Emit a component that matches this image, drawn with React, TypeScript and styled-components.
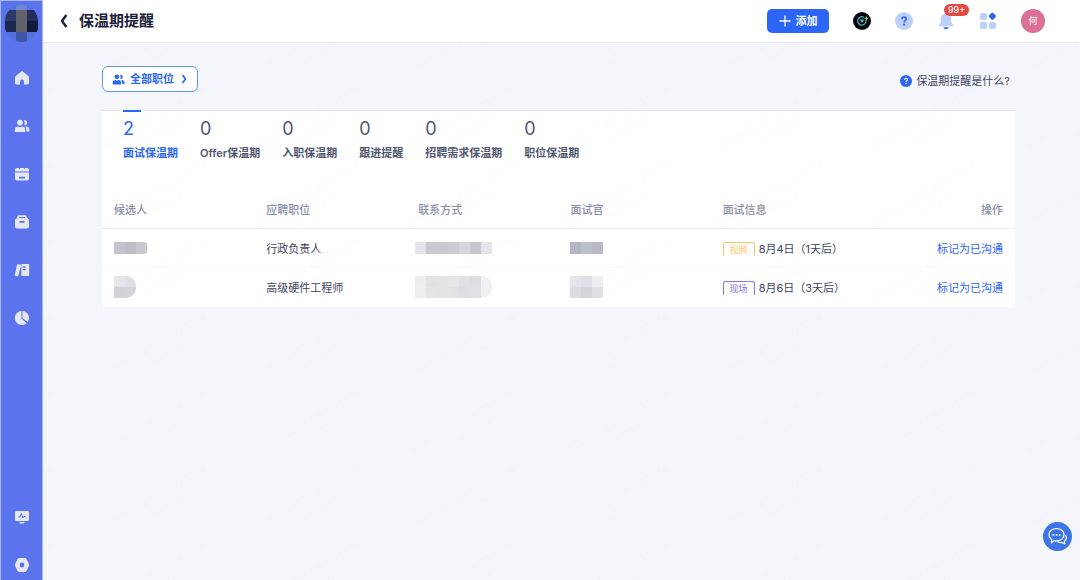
import React from "react";
import styled, { createGlobalStyle } from "styled-components";

const GlobalStyle = createGlobalStyle`
  * { box-sizing: border-box; }
  body {
    margin: 0;
    background: #f4f6fb;
    color: #3f4560;
    font-family: Inter, "Noto Sans CJK SC", sans-serif;
    font-size: 11px;
    line-height: 16px;
  }
  a { color: inherit; text-decoration: none; }
  button {
    margin: 0;
    padding: 0;
    border: 0;
    background: none;
    color: inherit;
    font: inherit;
    cursor: pointer;
  }
  svg { display: block; flex: none; }
`;

const Shell = styled.div`
  display: flex;
  align-items: flex-start;
  min-height: 100vh;
`;

const Sidebar = styled.aside`
  position: sticky;
  top: 0;
  flex: none;
  display: flex;
  flex-direction: column;
  align-items: center;
  justify-content: space-between;
  width: 43px;
  height: 100vh;
  padding: 4px 0 7px;
  background: #5b74ee;
  border: solid #a9b7f6;
  border-width: 1px 1px 0;
  color: #e5e8f4;
`;

const SidebarTop = styled.div`
  display: flex;
  flex-direction: column;
  align-items: center;
  gap: 28px;
`;

const NavGroup = styled.nav`
  display: flex;
  flex-direction: column;
  align-items: center;
  gap: 32px;
`;

const NavLink = styled.a`
  display: block;
`;

const Column = styled.div`
  flex: 1;
  min-width: 0;
  min-height: 100vh;
  display: flex;
  flex-direction: column;
`;

const Header = styled.header`
  display: flex;
  align-items: center;
  justify-content: space-between;
  height: 43px;
  padding: 0 35px 0 16px;
  background: #fff;
  border-bottom: 1px solid #e6e9f0;
`;

const TitleGroup = styled.div`
  display: flex;
  align-items: center;
  gap: 10px;
  color: #1c2038;
`;

const Title = styled.h1`
  margin: 0;
  font-size: 15px;
  line-height: 22px;
  font-weight: 700;
`;

const Actions = styled.div`
  display: flex;
  align-items: center;
  gap: 24px;
`;

const AddButton = styled.button`
  display: flex;
  align-items: center;
  justify-content: center;
  gap: 5px;
  width: 62px;
  height: 24px;
  border-radius: 5px;
  background: #2b66f7;
  color: #fff;
  font-weight: 600;
`;

const IconButton = styled.button`
  position: relative;
`;

const Badge = styled.span`
  position: absolute;
  left: 7px;
  top: -8px;
  padding: 0 4px;
  border-radius: 6px;
  background: #df4b43;
  color: #fff;
  font-size: 9px;
  line-height: 12px;
`;

const Avatar = styled.button`
  width: 24px;
  height: 24px;
  border-radius: 50%;
  background: #dd6e96;
  color: #fff;
  font-size: 9px;
`;

const Main = styled.main`
  position: relative;
  flex: 1;
  padding: 23px 65px 23px 59px;
`;

const Watermark = styled.svg`
  position: absolute;
  inset: 0;
  width: 100%;
  height: 100%;
  pointer-events: none;
  font-size: 10px;
`;

const Toolbar = styled.div`
  display: flex;
  align-items: center;
  justify-content: space-between;
  margin-bottom: 18px;
`;

const FilterButton = styled.button`
  display: flex;
  align-items: center;
  gap: 5px;
  height: 26px;
  padding: 0 9px;
  border: 1px solid #6594f9;
  border-radius: 6px;
  background: #fff;
  color: #2b66f7;
  font-weight: 600;
`;

const HelpLink = styled.a`
  display: flex;
  align-items: center;
  gap: 4px;
  padding: 3px 5px 0 0;
`;

const Card = styled.section`
  background: #fff;
  border-top: 1px solid #e3e6ee;
`;

const Tabs = styled.div`
  display: flex;
  gap: 22px;
  padding: 0 21px;
`;

const Tab = styled.button<{ $active?: boolean }>`
  position: relative;
  display: flex;
  flex-direction: column;
  gap: 5px;
  padding: 7px 0 29px;
  text-align: left;
  font-weight: 600;
  color: ${(p) => (p.$active ? "#2b66f7" : "#50566f")};

  &::before {
    content: "";
    position: absolute;
    left: 0;
    top: -1px;
    width: 18px;
    height: 2px;
    background: ${(p) => (p.$active ? "#2b66f7" : "transparent")};
  }
`;

const Count = styled.span`
  font-size: 18px;
  line-height: 22px;
  font-weight: 400;
`;

const Table = styled.table`
  width: 100%;
  border-collapse: separate;
  border-spacing: 0;
  table-layout: fixed;
`;

const HeadCell = styled.th<{ $end?: boolean }>`
  height: 39px;
  padding: 2px 12px 0;
  border-bottom: 1px solid #eceef4;
  color: #8a8fa8;
  font-weight: 500;
  text-align: ${(p) => (p.$end ? "right" : "left")};
`;

const Cell = styled.td<{ $end?: boolean }>`
  height: 39px;
  padding: 2px 12px 0;
  border-bottom: 1px solid #f6f7fa;
  text-align: ${(p) => (p.$end ? "right" : "left")};
  white-space: nowrap;

  tr:last-child > & {
    border-bottom-color: #fff;
  }
`;

const Interview = styled.div`
  display: flex;
  align-items: center;
  gap: 4px;
`;

const Tag = styled.span<{ $color: string }>`
  width: 32px;
  border: 1px solid ${(p) => p.$color};
  border-bottom: 0;
  border-radius: 3px 3px 0 0;
  color: ${(p) => p.$color};
  font-size: 9px;
  line-height: 13px;
  text-align: center;
`;

const RowLink = styled.a`
  color: #2b66f7;
`;

const MaskGrid = styled.div<{ $columns: number; $tall?: boolean; $pull?: boolean; $radius: number }>`
  display: grid;
  width: max-content;
  grid-template-columns: repeat(${(p) => p.$columns}, 11px);
  grid-auto-rows: ${(p) => (p.$tall ? 11 : 12)}px;
  margin: 0 0 2px ${(p) => (p.$pull ? -3 : 0)}px;
  border-radius: 0 ${(p) => p.$radius}px ${(p) => p.$radius}px 0;
  overflow: hidden;
`;

const MaskCell = styled.span<{ $color: string }>`
  background: ${(p) => p.$color};
`;

const ChatButton = styled.button`
  position: fixed;
  right: 8px;
  bottom: 29px;
  width: 29px;
  height: 29px;
  display: grid;
  place-items: center;
  border-radius: 50%;
  background: #3d74e8;
  color: #fff;
`;

const NavIcon = ({ children }: { children: React.ReactNode }) => (
  <svg width="16" height="16" viewBox="0 0 16 16" fill="currentColor" aria-hidden="true">
    {children}
  </svg>
);

const people = (
  <>
    <circle cx="6" cy="4.6" r="2.9" />
    <path d="M.8 13.4v-1.7c0-2.2 1.6-3.2 3.4-3.2l1.8 1 1.8-1c1.9 0 3.4 1 3.4 3.2v1.7c0 .4-.2.6-.6.6H1.4c-.4 0-.6-.2-.6-.6z" />
    <path d="M10 2.2a2.6 2.6 0 1 1 .2 5.1c.7-1.600.7-3.500-.2-5.1zM10.900 8.600c2.700-.5 4.500.7 4.500 3v1.300c0 .4-.2.6-.6.6h-2.400v-1.800c0-1.300-.5-2.400-1.500-3.100z" />
  </>
);

const mainNav = [
  {
    label: "首页",
    icon: <path d="M7 1.700 1.900 5.700C1.200 6.300 1 6.800 1 7.600v5.200c0 1 .6 1.700 1.600 1.700h3.500v-3.200c0-2.500 3.800-2.500 3.800 0v3.200h3.500c1 0 1.600-.7 1.600-1.700V7.600c0-.8-.2-1.300-.9-1.900L9 1.700c-.7-.5-1.300-.5-2 0z" />,
  },
  { label: "候选人", icon: people },
  {
    label: "日程",
    icon: (
      <path
        fillRule="evenodd"
        d="M3 2h1.600l.900.900.900-.900h3.200l.900.900.900-.900H13c1.300 0 2 .8 2 2v1.500H1V4c0-1.200.7-2 2-2zM1 6.500h14v6c0 1.300-.7 2-2 2H3c-1.300 0-2-.7-2-2zm4 4.200v1.900h6v-1.900z"
      />
    ),
  },
  {
    label: "职位",
    icon: (
      <path
        fillRule="evenodd"
        d="M4.800 1.200h6.400c.7 0 1.100.3 1.300.9l.5 1.800c1.300.5 2 1.200 2 2.500v6.100c0 1.300-.7 2-2 2H3c-1.300 0-2-.7-2-2V6.400c0-1.300.7-2 2-2.500l.5-1.800c.2-.6.6-.9 1.300-.9zM5 3v1h6V3zm.4 4v1.700h5.200V7z"
      />
    ),
  },
  {
    label: "资料库",
    icon: (
      <>
        <path d="m3.800 2.200 2.700.600c.4.100.6.400.5.800L4.300 13.800c-.1.400-.4.600-.8.500l-2.200-.6c-.4-.1-.6-.4-.5-.800L3 2.700c.1-.400.400-.600.800-.5z" />
        <path fillRule="evenodd" d="M8 2h6.500c.4 0 .7.300.7.700v10.600c0 .4-.3.700-.7.700H8c-.4 0-.7-.3-.7-.7V2.700c0-.4.300-.7.700-.7zm.7 2.200v1.300h3.100V4.200zm0 2.800v1.300h3.100V7z" />
      </>
    ),
  },
  {
    label: "报表",
    icon: (
      <>
        <path d="M7.500 1v7.400l5 4.800A7 7 0 1 1 7.500 1z" />
        <path d="M8.500 1a7 7 0 0 1 5.200 11L8.500 8z" />
      </>
    ),
  },
];

const footNav = [
  {
    label: "监控",
    icon: (
      <>
        <rect x="1" y="2" width="14" height="10" rx="1.500" />
        <path d="M4 8h1.800l1.500-3.500L8.800 9l1.400-2 .7 1H12" fill="none" stroke="#5b74ee" strokeWidth="1" strokeLinejoin="round" />
        <rect x="5.500" y="13" width="5" height="1.500" rx=".7" />
      </>
    ),
  },
  {
    label: "设置",
    icon: (
      <path
        fillRule="evenodd"
        d="M5.200 1h5.600c.700 0 1.200.3 1.500.8l2.600 5.200c.300.700.300 1.300 0 2l-2.600 5.200c-.3.500-.8.800-1.500.8H5.200c-.700 0-1.200-.3-1.500-.8L1.100 9c-.3-.7-.3-1.300 0-2l2.600-5.200c.3-.5.800-.8 1.500-.8zM8 5.600a2.400 2.400 0 1 0 0 4.800 2.400 2.400 0 0 0 0-4.800z"
      />
    ),
  },
];

const BrandAvatar = () => (
  <svg width="33" height="37" viewBox="0 0 33 37" aria-hidden="true">
    <defs>
      <clipPath id="brand">
        <rect width="33" height="37" rx="16" />
      </clipPath>
    </defs>
    <g clipPath="url(#brand)">
      <rect width="33" height="37" fill="#5570df" />
      <rect x="11" width="11" height="5" fill="#7187cf" />
      <rect y="5" width="11" height="11" fill="#2d3a69" />
      <rect x="11" y="5" width="11" height="22" fill="#60626a" />
      <rect x="22" y="5" width="11" height="11" fill="#262c58" />
      <rect y="16" width="11" height="11" fill="#1d264e" />
      <rect x="22" y="16" width="11" height="11" fill="#14183b" />
      <rect x="11" y="27" width="11" height="10" fill="#4055a8" />
    </g>
  </svg>
);

const QuestionIcon = ({ size, disc, mark }: { size: number; disc: string; mark: string }) => (
  <svg width={size} height={size} viewBox="0 0 18 18" aria-hidden="true">
    <circle cx="9" cy="9" r="9" fill={disc} />
    <path d="M6.900 7.200c0-2.900 4.300-2.800 4.300-.2 0 1.600-2.100 1.700-2.100 3.400" fill="none" stroke={mark} strokeWidth="1.700" />
    <circle cx="9.100" cy="12.600" r="1.100" fill={mark} />
  </svg>
);

const tabs = [
  { count: 2, label: "面试保温期" },
  { count: 0, label: "Offer保温期" },
  { count: 0, label: "入职保温期" },
  { count: 0, label: "跟进提醒" },
  { count: 0, label: "招聘需求保温期" },
  { count: 0, label: "职位保温期" },
];

const headings = ["候选人", "应聘职位", "联系方式", "面试官", "面试信息", "操作"];

interface MaskData {
  rows: string[][];
  radius?: number;
  pull?: boolean;
}

const rows: {
  name: MaskData;
  job: string;
  contact: MaskData;
  interviewer: MaskData;
  tag: string;
  color: string;
  date: string;
}[] = [
  {
    name: { rows: [["#c3c5cd", "#bdbec6", "#c6c8d0"]], radius: 3 },
    job: "行政负责人",
    contact: { rows: [["#e4e4e9", "#c9cad0", "#c8c9cf", "#cbccd1", "#d5d6dc", "#c6c6d0", "#e4e4ea"]], pull: true },
    interviewer: { rows: [["#b5b5c2", "#bec1c9", "#b9b9c5"]] },
    tag: "视频",
    color: "#f5c862",
    date: "8月4日（1天后）",
  },
  {
    name: { rows: [["#e5e6ea", "#dfe0e5"], ["#d3d4da", "#d4d5da"]], radius: 10 },
    job: "高级硬件工程师",
    contact: {
      rows: [
        ["#ededf0", "#e3e3e7", "#e3e3e6", "#e6e6e9", "#e0e0e5", "#dedee3", "#f0f0f2"],
        ["#eeeff1", "#e5e5e8", "#e4e4e7", "#e3e3e6", "#dfdfe4", "#e0e0e5", "#f0f0f2"],
      ],
      radius: 10,
      pull: true,
    },
    interviewer: { rows: [["#e4e5e9", "#e0e1e6", "#eeeef1"], ["#dddee3", "#d5d6dc", "#dfe0e4"]], radius: 2 },
    tag: "现场",
    color: "#8a72f0",
    date: "8月6日（3天后）",
  },
];

const Mask = ({ rows: cells, radius = 0, pull }: MaskData) => (
  <MaskGrid $columns={cells[0].length} $tall={cells.length > 1} $pull={pull} $radius={radius}>
    {cells.flat().map((color, i) => (
      <MaskCell key={i} $color={color} />
    ))}
  </MaskGrid>
);

const Nav = ({ items, label }: { items: typeof mainNav; label: string }) => (
  <NavGroup aria-label={label}>
    {items.map((item) => (
      <NavLink key={item.label} href="#" aria-label={item.label}>
        <NavIcon>{item.icon}</NavIcon>
      </NavLink>
    ))}
  </NavGroup>
);

export default function App() {
  return (
    <>
      <GlobalStyle />
      <Shell>
        <Sidebar>
          <SidebarTop>
            <BrandAvatar />
            <Nav items={mainNav} label="主导航" />
          </SidebarTop>
          <Nav items={footNav} label="系统" />
        </Sidebar>
        <Column>
          <Header>
            <TitleGroup>
              <button aria-label="返回">
                <svg width="10" height="16" viewBox="0 0 10 16" fill="none" stroke="currentColor" strokeWidth="2.400">
                  <path d="M7.400 2 3 8l4.400 6" strokeLinejoin="round" />
                </svg>
              </button>
              <Title>保温期提醒</Title>
            </TitleGroup>
            <Actions>
              <AddButton>
                <svg width="12" height="12" viewBox="0 0 12 12" stroke="currentColor" strokeWidth="1.300" aria-hidden="true">
                  <path d="M6 .5v11M.5 6h11" />
                </svg>
                添加
              </AddButton>
              <IconButton aria-label="助手">
                <svg width="18" height="18" viewBox="0 0 18 18" fill="none">
                  <circle cx="9" cy="9" r="9" fill="#07080f" />
                  <path d="M10.800 5.200A4.200 4.200 0 1 0 13 8.200" stroke="#46b9b4" strokeWidth="1.200" strokeLinecap="round" />
                  <path d="m7 7.600 4.200.100L9 11z" fill="#5ad0d8" />
                  <path d="m13.300 4.300.7 1.400 1.400.7-1.400.7-.7 1.300-.7-1.300-1.400-.7 1.400-.7z" fill="#a5d867" />
                </svg>
              </IconButton>
              <IconButton aria-label="帮助">
                <QuestionIcon size={18} disc="#bdd0fb" mark="#2b66f7" />
              </IconButton>
              <IconButton aria-label="通知">
                <svg width="18" height="18" viewBox="0 0 18 18">
                  <path d="M9 1.500c-3.300 0-5.200 2.300-5.200 5.300v3.700L1.700 13c-.5.600-.1 1.300.6 1.300h13.400c.7 0 1.100-.7.600-1.300l-2.100-2.500V6.800c0-3-1.900-5.300-5.200-5.300z" fill="#bdd0fb" />
                  <path d="M6.300 15.300h5.400c-.4 1.300-1.400 2-2.700 2s-2.300-.7-2.700-2z" fill="#2b66f7" />
                </svg>
                <Badge>99+</Badge>
              </IconButton>
              <IconButton aria-label="应用">
                <svg width="18" height="18" viewBox="0 0 18 18" fill="#bdd0fb">
                  <rect x="1" y="1" width="7" height="7" rx="2" />
                  <rect x="1" y="10" width="7" height="7" rx="2" />
                  <rect x="10" y="10" width="7" height="7" rx="2" />
                  <rect x="10.500" y="1.300" width="5.800" height="5.800" rx="1.300" fill="#2b66f7" transform="rotate(45 13.400 4.200)" />
                </svg>
              </IconButton>
              <Avatar>何</Avatar>
            </Actions>
          </Header>
          <Main>
            <Toolbar>
              <FilterButton>
                <svg width="13" height="13" viewBox="0 0 16 16" fill="currentColor" aria-hidden="true">
                  {people}
                </svg>
                全部职位
                <svg width="9" height="10" viewBox="0 0 9 10" fill="none" stroke="currentColor" strokeWidth="1.700" aria-hidden="true">
                  <path d="m3.500 1 3 4-3 4" strokeLinejoin="round" />
                </svg>
              </FilterButton>
              <HelpLink href="#">
                <QuestionIcon size={12} disc="#2b66f7" mark="#fff" />
                保温期提醒是什么?
              </HelpLink>
            </Toolbar>
            <Card>
              <Tabs role="tablist">
                {tabs.map((tab, i) => (
                  <Tab key={tab.label} role="tab" aria-selected={i === 0} $active={i === 0}>
                    <Count>{tab.count}</Count>
                    {tab.label}
                  </Tab>
                ))}
              </Tabs>
              <Table>
                <thead>
                  <tr>
                    {headings.map((heading, i) => (
                      <HeadCell key={heading} scope="col" $end={i === headings.length - 1}>
                        {heading}
                      </HeadCell>
                    ))}
                  </tr>
                </thead>
                <tbody>
                  {rows.map((row) => (
                    <tr key={row.job}>
                      <Cell><Mask {...row.name} /></Cell>
                      <Cell>{row.job}</Cell>
                      <Cell><Mask {...row.contact} /></Cell>
                      <Cell><Mask {...row.interviewer} /></Cell>
                      <Cell>
                        <Interview>
                          <Tag $color={row.color}>{row.tag}</Tag>
                          {row.date}
                        </Interview>
                      </Cell>
                      <Cell $end>
                        <RowLink href="#">标记为已沟通</RowLink>
                      </Cell>
                    </tr>
                  ))}
                </tbody>
              </Table>
            </Card>
            <Watermark aria-hidden="true">
              <defs>
                <pattern id="mark" x="53" y="33" width="154" height="76" patternUnits="userSpaceOnUse">
                  <g fill="#20284a" fillOpacity=".016">
                    <text transform="translate(9 74) rotate(-30)">何瑞玲 2023-08-03 12:14</text>
                    <text transform="translate(51 66) rotate(-30)">ruiling.he</text>
                  </g>
                </pattern>
              </defs>
              <rect width="100%" height="100%" fill="url(#mark)" />
            </Watermark>
          </Main>
        </Column>
      </Shell>
      <ChatButton aria-label="在线客服">
        <svg width="21" height="21" viewBox="0 0 21 21" fill="none" stroke="currentColor" strokeWidth="1.200" strokeLinejoin="round">
          <path d="M9.500 2.500c4.300 0 7.500 2.600 7.500 6.200s-3.200 6.200-7.500 6.200c-.9 0-1.700-.1-2.400-.3L4.500 16.800l.1-3.300C3 12.400 2 10.700 2 8.700c0-3.600 3.200-6.200 7.500-6.200z" />
          <path d="M18.300 8.800c1.500 2.200.9 4.900-.900 6.400l.3 2.800-2.400-1.500c-1.800.4-3.400.1-4.700-.9" />
          <path d="M5.500 8.800h1.600M8.700 8.800h1.600M11.900 8.800h1.600" strokeWidth="1.700" />
        </svg>
      </ChatButton>
    </>
  );
}
